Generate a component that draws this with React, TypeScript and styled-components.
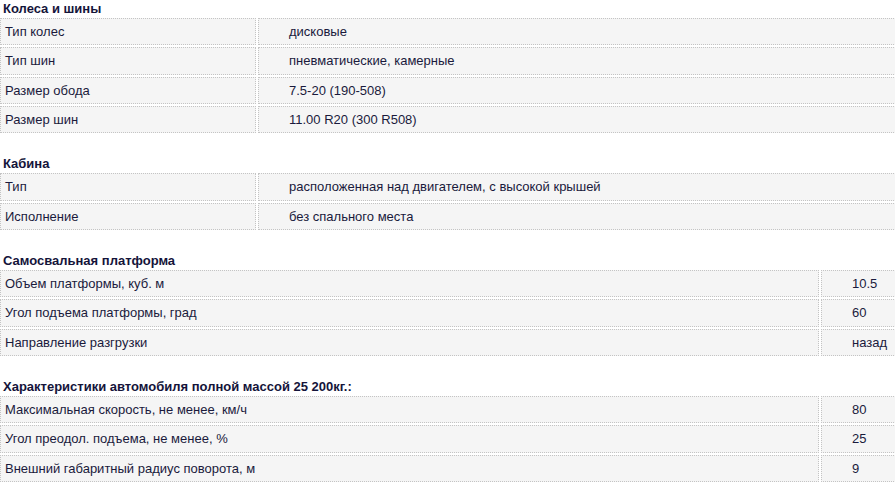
import React from "react";
import styled, { createGlobalStyle } from "styled-components";

const Global = createGlobalStyle`
  html, body {
    margin: 0;
    padding: 0;
    overflow: hidden;
    background: #ffffff;
  }
  body {
    font-family: "Liberation Sans", Arial, Helvetica, sans-serif;
    font-size: 13px;
    color: #1a1a3c;
  }
`;

const Page = styled.div`
  width: 895px;
  overflow: hidden;
`;

const Section = styled.section`
  margin-bottom: 20px;
`;

const Heading = styled.h3`
  margin: 0;
  padding: 1px 0 0 3px;
  font-size: 13px;
  line-height: 15px;
  font-weight: bold;
  color: #14143a;
`;

const Table = styled.table`
  border-collapse: separate;
  border-spacing: 2px;
  margin: 0 -2px;
  width: 924px;
  table-layout: fixed;
`;

const Cell = styled.td<{ $value?: boolean }>`
  background: #f5f5f5;
  border: 1px dotted #c4c4c4;
  padding: 5px 4px 5px ${(p) => (p.$value ? "30px" : "4px")};
  line-height: 15.33px;
  font-size: 13px;
  color: #1a1a3c;
  white-space: nowrap;
  overflow: hidden;
`;

type Row = [string, string];

type Group = {
  title: string;
  labelWidth: number;
  rows: Row[];
};

const groups: Group[] = [
  {
    title: "Колеса и шины",
    labelWidth: 256,
    rows: [
      ["Тип колес", "дисковые"],
      ["Тип шин", "пневматические, камерные"],
      ["Размер обода", "7.5-20 (190-508)"],
      ["Размер шин", "11.00 R20 (300 R508)"],
    ],
  },
  {
    title: "Кабина",
    labelWidth: 256,
    rows: [
      ["Тип", "расположенная над двигателем, с высокой крышей"],
      ["Исполнение", "без спального места"],
    ],
  },
  {
    title: "Самосвальная платформа",
    labelWidth: 819,
    rows: [
      ["Объем платформы, куб. м", "10.5"],
      ["Угол подъема платформы, град", "60"],
      ["Направление разгрузки", "назад"],
    ],
  },
  {
    title: "Характеристики автомобиля полной массой 25 200кг.:",
    labelWidth: 819,
    rows: [
      ["Максимальная скорость, не менее, км/ч", "80"],
      ["Угол преодол. подъема, не менее, %", "25"],
      ["Внешний габаритный радиус поворота, м", "9"],
    ],
  },
];

export default function App() {
  return (
    <>
      <Global />
      <Page>
        {groups.map((g) => (
          <Section key={g.title}>
            <Heading>{g.title}</Heading>
            <Table>
              <colgroup>
                <col style={{ width: g.labelWidth }} />
                <col />
              </colgroup>
              <tbody>
                {g.rows.map(([label, value]) => (
                  <tr key={label}>
                    <Cell>{label}</Cell>
                    <Cell $value>{value}</Cell>
                  </tr>
                ))}
              </tbody>
            </Table>
          </Section>
        ))}
      </Page>
    </>
  );
}
